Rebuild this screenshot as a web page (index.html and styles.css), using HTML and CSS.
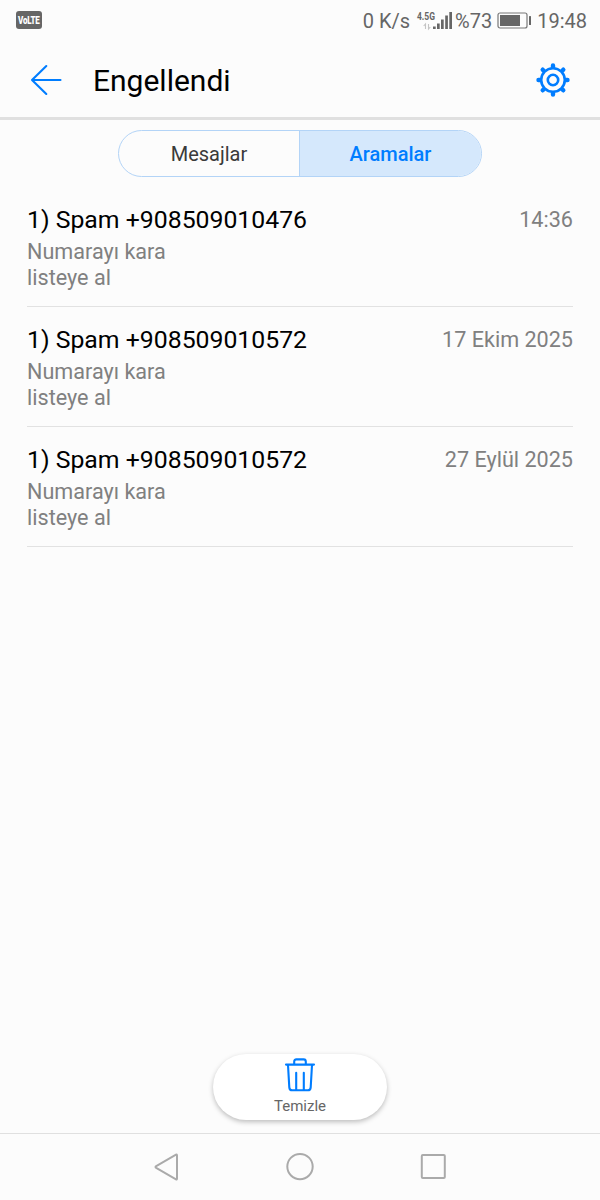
FILE: index.html
```html
<!DOCTYPE html>
<html lang="tr">
<head>
    <meta charset="UTF-8">
    <meta name="viewport" content="width=device-width, initial-scale=1.0">
    <title>Engellendi</title>
    <link rel="stylesheet" href="styles.css">
</head>
<body>
    <div class="status-bar">
        <svg class="volte" width="26" height="18" viewBox="0 0 26 18">
            <rect width="26" height="18" rx="3" fill="#666"/>
            <text class="volte-text" x="2" y="10" transform="scale(1 1.3)">VoLTE</text>
        </svg>
        <div class="status-right">
            <span class="speed">0 K/s</span>
            <svg class="signal" width="38" height="20" viewBox="0 0 38 20">
                <text class="network" x="1" y="8.5" textLength="18" lengthAdjust="spacingAndGlyphs">4.5G</text>
                <path d="M9.5 18v-5l-1.8 2M12.5 13v5l1.8-2" fill="none" stroke="#c4c4c4" stroke-width="1.1"/>
                <path d="M17 15.5h2.7V18H17zM21 12.5h2.7V18H21zM25 8.5h2.7V18H25zM29.2 4.5h2.7V18h-2.7zM33.3 1H36v17h-2.7z" fill="#666"/>
            </svg>
            <span class="percent">%73</span>
            <svg class="battery" width="35" height="17" viewBox="0 0 35 17">
                <rect x="1" y="1" width="29" height="15" rx="2" fill="none" stroke="#777" stroke-width="1.2"/>
                <rect x="3" y="3" width="20" height="11" fill="#666"/>
                <rect x="32" y="4" width="2" height="9" rx="0.5" fill="#666"/>
            </svg>
            <span class="clock">19:48</span>
        </div>
    </div>

    <header class="header">
        <svg class="back" width="32" height="32" viewBox="0 0 32 32">
            <path d="M16.3 2L2 16l14.3 14M2 16h28.5" fill="none" stroke="#007dff" stroke-width="2.1" stroke-linecap="round" stroke-linejoin="round"/>
        </svg>
        <h1>Engellendi</h1>
        <svg class="settings" width="34" height="34" viewBox="-17 -17 34 34">
            <g fill="none" stroke="#007dff" stroke-linecap="round">
                <circle r="11.8" stroke-width="2.6"/>
                <circle r="5.2" stroke-width="2.6"/>
                <path d="M0-13.3v-1.2M0 13.3v1.2M-13.3 0h-1.2M13.3 0h1.2M9.5-9.5l.8-.8M-9.5-9.5l-.8-.8M9.5 9.5l.8.8M-9.5 9.5l-.8.8" stroke-width="4.4"/>
            </g>
        </svg>
    </header>

    <main class="content">
        <div class="tabs">
            <div class="tab">Mesajlar</div>
            <div class="tab active">Aramalar</div>
        </div>

        <ul class="call-list">
            <li class="call">
                <div class="call-top">
                    <span class="number">1) Spam +908509010476</span>
                    <span class="date">14:36</span>
                </div>
                <p class="reason">Numarayı kara<br>listeye al</p>
            </li>
            <li class="call">
                <div class="call-top">
                    <span class="number">1) Spam +908509010572</span>
                    <span class="date">17 Ekim 2025</span>
                </div>
                <p class="reason">Numarayı kara<br>listeye al</p>
            </li>
            <li class="call">
                <div class="call-top">
                    <span class="number">1) Spam +908509010572</span>
                    <span class="date">27 Eylül 2025</span>
                </div>
                <p class="reason">Numarayı kara<br>listeye al</p>
            </li>
        </ul>
    </main>

    <button class="clear">
        <svg width="32" height="36" viewBox="0 0 32 36">
            <g fill="none" stroke="#007dff" stroke-width="2.1" stroke-linecap="round" stroke-linejoin="round">
                <path d="M2 7.6h28M10.2 7.2V4.8q0-2.4 2.2-2.4h7.2q2.2 0 2.2 2.4v2.4"/>
                <path d="M4 8l1.3 22.4q.2 2.9 2.9 2.9h15.6q2.7 0 2.9-2.9L28 8"/>
                <path d="M12.2 15.8V33M19.8 15.8V33"/>
            </g>
        </svg>
        <span>Temizle</span>
    </button>

    <nav class="nav-bar">
        <svg width="28" height="30" viewBox="0 0 28 30">
            <path d="M3.2 14.1L23 2.7q1-.5 1 .7v23.2q0 1.2-1 .7L3.2 15.9q-1.4-.9 0-1.8z" fill="none" stroke="#aaa" stroke-width="2"/>
        </svg>
        <svg width="28" height="30" viewBox="0 0 28 30">
            <circle cx="14" cy="14.6" r="12.7" fill="none" stroke="#aaa" stroke-width="2"/>
        </svg>
        <svg width="28" height="30" viewBox="0 0 28 30">
            <rect x="2.8" y="3" width="23" height="23" rx="1" fill="none" stroke="#aaa" stroke-width="2"/>
        </svg>
    </nav>
</body>
</html>
```

FILE: styles.css
```css
* {
    box-sizing: border-box;
}

body {
    margin: 0;
    height: 1200px;
    display: flex;
    flex-direction: column;
    background: #fcfcfc;
    color: #000;
    font-family: Roboto, sans-serif;
}

.status-bar {
    height: 40px;
    padding: 2px 13px 0 16px;
    display: flex;
    align-items: center;
    justify-content: space-between;
    color: #666;
    font-size: 20px;
}

.volte {
    margin-bottom: 2px;
}

.volte-text {
    font-size: 8px;
    font-weight: 900;
    letter-spacing: -0.2px;
    fill: #fff;
}

.status-right {
    display: flex;
    align-items: center;
}

.signal {
    margin: 0 1px 0 6px;
}

.network {
    font-size: 10px;
    font-weight: 700;
    fill: #666;
}

.battery {
    margin: 0 5px 2px;
}

.header {
    height: 80px;
    padding: 2px 30px 0;
    display: flex;
    align-items: center;
    border-bottom: 3px solid #e0e0e0;
}

h1 {
    margin: 2px 0 0 31px;
    flex: 1;
    font-size: 30px;
    font-weight: 400;
}

.content {
    flex: 1;
}

.tabs {
    width: 364px;
    height: 47px;
    margin: 10px auto 0;
    display: flex;
    border: 1px solid #b3d4f7;
    border-radius: 24px;
    overflow: hidden;
}

.tab {
    width: 180px;
    color: #3a3a3a;
    font-size: 20px;
    line-height: 47px;
    text-align: center;
}

.tab.active {
    width: 182px;
    background: #d5e8fc;
    border-left: 1px solid #b3d4f7;
    color: #007dff;
    font-weight: 500;
}

.call-list {
    margin: 10px 27px 0;
    padding: 0;
    list-style: none;
}

.call {
    height: 120px;
    padding-top: 17px;
    border-bottom: 1px solid #e2e2e2;
}

.call-top {
    display: flex;
    align-items: center;
    justify-content: space-between;
    height: 30px;
}

.number {
    font-size: 24.8px;
}

.date {
    padding-top: 1px;
    color: #808080;
    font-size: 21.6px;
}

.reason {
    margin: 5px 0 0;
    color: #808080;
    font-size: 21.6px;
    line-height: 26px;
}

.clear {
    width: 174px;
    height: 66px;
    margin: 0 auto 13px;
    padding: 3px 0 0;
    display: flex;
    flex-direction: column;
    align-items: center;
    justify-content: flex-start;
    gap: 3px;
    border: none;
    border-radius: 33px;
    background: #fff;
    box-shadow: 0 2px 5px rgba(0, 0, 0, 0.25);
    color: #666;
    font-family: inherit;
    font-size: 15px;
    line-height: 20px;
}

.nav-bar {
    height: 67px;
    padding: 0 153px;
    display: flex;
    align-items: center;
    justify-content: space-between;
    border-top: 1px solid #e0e0e0;
}
```
